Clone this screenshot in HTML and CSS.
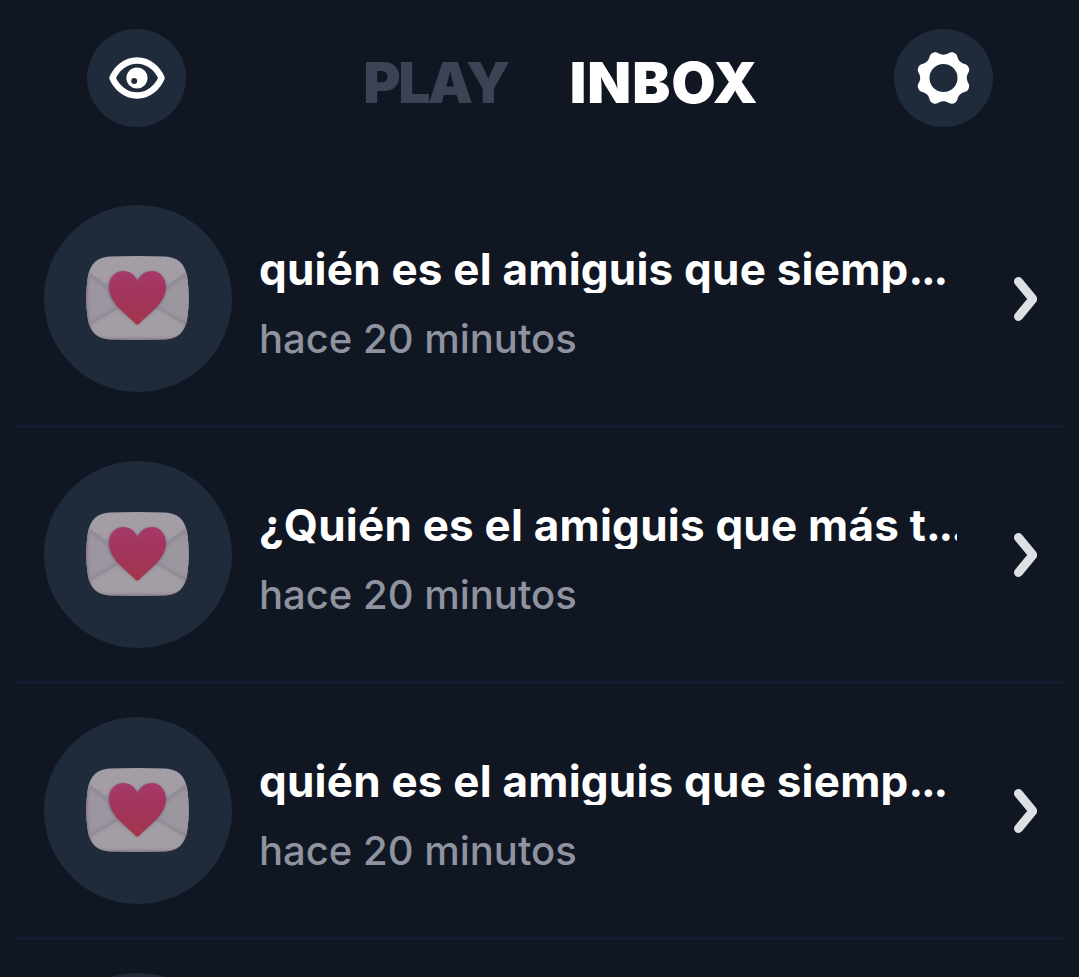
FILE: index.html
```html
<!DOCTYPE html>
<html lang="es">
<head>
  <meta charset="UTF-8" />
  <meta name="viewport" content="width=device-width, initial-scale=1.0"/>
  <title>Inbox</title>
  <link rel="stylesheet" href="styles.css">
</head>
<body>
  <!-- Shared icons -->
  <svg class="sprite" width="0" height="0">
    <defs>
      <linearGradient id="paper" x1="0" y1="0" x2="1" y2="1">
        <stop offset="0" stop-color="#a49da6"/>
        <stop offset="1" stop-color="#a29da4"/>
      </linearGradient>
      <linearGradient id="love" x1="0" y1="0" x2="0" y2="1">
        <stop offset="0" stop-color="#a63a69"/>
        <stop offset="0.5" stop-color="#a1345a"/>
        <stop offset="1" stop-color="#a5354a"/>
      </linearGradient>
      <filter id="soft" x="-20%" y="-20%" width="140%" height="140%">
        <feGaussianBlur stdDeviation="1.8"/>
      </filter>
      <clipPath id="envelope">
        <path d="M24 .5Q51.500 -.3 79 .5C91 1 98.500 7 101 20Q104.500 42 101 64C98.500 77 91 83 79 83.500Q51.500 84.300 24 83.500C12 83 4.500 77 2 64Q-1.500 42 2 20C4.500 7 12 1 24 .5Z"/>
      </clipPath>
    </defs>
    <symbol id="letter" viewBox="0 0 103 84">
      <g clip-path="url(#envelope)">
        <rect width="103" height="84" fill="url(#paper)"/>
        <path d="M0 13L33 37Q51 49 70 37L103 13V70L70 52Q51 38 33 52L0 70Z" fill="#9c96a0"/>
        <path d="M-2 15L33 40M105 15L70 40M-2 71L34 50M105 71L69 50" fill="none" stroke="#857e8a" stroke-width="2" filter="url(#soft)"/>
        <path d="M1 20Q-1 42 1 64C3 79 8 84 24 84H79C95 84 100 79 102 64" fill="none" stroke="#80757f" stroke-width="3" filter="url(#soft)"/>
      </g>
      <path d="M51 69C43 60 22 50 22 31C22 14 44 10 51 25C58 10 80 14 80 31C80 50 59 60 51 69Z" fill="#7b6d79" filter="url(#soft)"/>
      <path d="M51.500 68.500Q50 68.500 48 66C38 56 23 46 23 31C23 22 29 15 37 15C44 15 49 19 51.500 25C54 19 59 15 66 15C74 15 80 22 80 31C80 46 65 56 55 66Q53 68.500 51.500 68.500Z" fill="url(#love)"/>
    </symbol>
    <symbol id="chevron" viewBox="0 0 24 44">
      <path d="M4.500 4.500L18.500 21.500V22.500L4.500 39.500" fill="none" stroke="#dde0e5" stroke-width="9" stroke-linecap="round" stroke-linejoin="round"/>
    </symbol>
  </svg>

  <!-- Top bar -->
  <header class="topbar">
    <button class="round-btn" aria-label="Ver">
      <svg width="56" height="44" viewBox="0 0 56 44">
        <path d="M3.500 22C7 13.500 16 4.500 28 4.500S49 13.500 52.500 22C49 30.500 40 39.500 28 39.500S7 30.500 3.500 22Z" fill="none" stroke="#fff" stroke-width="6.400" stroke-linejoin="round"/>
        <circle cx="28" cy="22" r="10.600" fill="#fff"/>
        <circle cx="25.200" cy="25" r="3" fill="#1f2a3b"/>
      </svg>
    </button>
    <nav class="tabs">
      <a class="tab tab-play">PLAY</a>
      <a class="tab tab-inbox active">INBOX</a>
    </nav>
    <button class="round-btn" aria-label="Ajustes">
      <svg width="56" height="56" viewBox="-27.500 -28 56 56">
        <path fill="#fff" fill-rule="evenodd" d="M0 -23.300C5 -23.300 5.850 -27.100 10.450 -25.200C15.050 -23.300 13 -20 16.500 -16.500C20 -13 23.300 -15.050 25.200 -10.450C27.100 -5.850 23.300 -5 23.300 0C23.300 5 27.100 5.850 25.200 10.450C23.300 15.050 20 13 16.500 16.500C13 20 15.050 23.300 10.450 25.200C5.850 27.100 5 23.300 0 23.300C-5 23.300 -5.850 27.100 -10.450 25.200C-15.050 23.300 -13 20 -16.500 16.500C-20 13 -23.300 15.050 -25.200 10.450C-27.100 5.850 -23.300 5 -23.300 0C-23.300 -5 -27.100 -5.850 -25.200 -10.450C-23.300 -15.050 -20 -13 -16.500 -16.500C-13 -20 -15.050 -23.300 -10.450 -25.200C-5.850 -27.100 -5 -23.300 0 -23.300ZM14 0A14 14 0 1 0 -14 0A14 14 0 1 0 14 0Z"/>
      </svg>
    </button>
  </header>

  <!-- Messages -->
  <main class="list">
    <div class="row">
      <div class="avatar"><svg width="103" height="84"><use href="#letter"/></svg></div>
      <div class="info">
        <div class="title">quién es el amiguis que siemp<span class="dots">...</span></div>
        <div class="time">hace 20 minutos</div>
      </div>
      <svg class="chevron" width="24" height="44"><use href="#chevron"/></svg>
    </div>
    <div class="row">
      <div class="avatar"><svg width="103" height="84"><use href="#letter"/></svg></div>
      <div class="info">
        <div class="title">¿Quién es el amiguis que más t<span class="dots">...</span></div>
        <div class="time">hace 20 minutos</div>
      </div>
      <svg class="chevron" width="24" height="44"><use href="#chevron"/></svg>
    </div>
    <div class="row">
      <div class="avatar"><svg width="103" height="84"><use href="#letter"/></svg></div>
      <div class="info">
        <div class="title">quién es el amiguis que siemp<span class="dots">...</span></div>
        <div class="time">hace 20 minutos</div>
      </div>
      <svg class="chevron" width="24" height="44"><use href="#chevron"/></svg>
    </div>
    <div class="row">
      <div class="avatar"></div>
    </div>
  </main>
</body>
</html>
```
FILE: styles.css
```css
* {
  box-sizing: border-box;
}

body {
  display: flex;
  flex-direction: column;
  margin: 0;
  height: 100vh;
  overflow: hidden;
  background: #101622;
  color: #fff;
  font-family: Inter, "Liberation Sans", sans-serif;
}

.sprite {
  position: absolute;
}

/* Top bar */
.topbar {
  display: flex;
  justify-content: space-between;
  align-items: flex-start;
  flex: none;
  height: 172px;
  padding: 29px 86px 0 87px;
}

.round-btn {
  display: flex;
  justify-content: center;
  align-items: center;
  width: 99px;
  height: 98px;
  padding: 0;
  border: none;
  border-radius: 50%;
  background: #1f2a3b;
}

.tabs {
  display: flex;
  gap: 62px;
  padding: 19px 0 0 42px;
}

.tab {
  font-size: 57px;
  font-weight: 900;
  line-height: 69px;
  color: #3b4454;
}

.tab-play {
  letter-spacing: -2.5px;
}

.tab-inbox {
  letter-spacing: 1.1px;
}

.tab.active {
  color: #fff;
}

/* Message list */
.list {
  flex: 1;
  min-height: 0;
  overflow: hidden;
  padding: 0 14px 0 15px;
}

.row {
  display: flex;
  align-items: center;
  height: 256px;
  padding: 0 27px 0 29px;
  border-bottom: 3px solid #141a31;
}

.avatar {
  display: flex;
  justify-content: center;
  align-items: center;
  flex: none;
  width: 188px;
  height: 187px;
  padding: 0 2px 2px 0;
  border-radius: 50%;
  background: #1f2a3b;
}

.info {
  flex: none;
  width: 698px;
  margin-left: 27px;
  padding-top: 10px;
}

.title {
  height: 48px;
  overflow: hidden;
  white-space: nowrap;
  font-size: 44px;
  font-weight: 700;
  line-height: 48px;
  letter-spacing: 0.22px;
}

.dots {
  letter-spacing: -2.2px;
}

.time {
  margin-top: 22px;
  font-size: 40px;
  font-weight: 500;
  line-height: 48px;
  color: #8f93a0;
}

.chevron {
  margin-left: auto;
}
```
